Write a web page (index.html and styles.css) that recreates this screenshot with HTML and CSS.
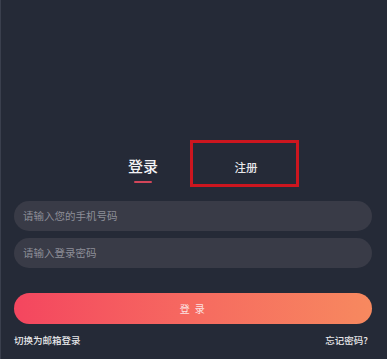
FILE: index.html
```html
<!DOCTYPE html>
<html lang="zh">
<head>
<meta charset="utf-8">
<link rel="stylesheet" href="styles.css">
</head>
<body>
<div class="page">
  <div class="tabs">
    <div class="tab tab-active">
      <span class="tab-label">登录</span>
      <span class="tab-line"></span>
    </div>
    <div class="tab tab-marked">
      <span class="tab-label-small">注册</span>
    </div>
  </div>
  <div class="form">
    <div class="field">请输入您的手机号码</div>
    <div class="field">请输入登录密码</div>
    <div class="btn">登 录</div>
    <div class="links">
      <span>切换为邮箱登录</span>
      <span>忘记密码?</span>
    </div>
  </div>
</div>
</body>
</html>
```

FILE: styles.css
```css
* { box-sizing: border-box; }
html, body {
  margin: 0;
  padding: 0;
  background: #252a37;
  font-family: "Noto Sans CJK SC", "Noto Sans", sans-serif;
}
body { width: 387px; height: 359px; overflow: hidden; }
.page {
  height: 359px;
  padding: 140px 15px 0 13px;
  border-left: 1px solid #3a3f4d;
}
.tabs {
  display: flex;
  align-items: flex-start;
  padding-left: 114px;
}
.tab-active {
  display: flex;
  flex-direction: column;
  align-items: center;
  margin-top: 17px;
  width: 30px;
}
.tab-label {
  color: #f2f2f4;
  font-size: 15px;
  font-weight: 500;
  line-height: 17px;
}
.tab-line {
  margin-top: 7px;
  width: 18px;
  height: 2px;
  background: #d2465a;
  border-radius: 1px;
}
.tab-marked {
  margin-left: 32px;
  width: 109px;
  height: 47px;
  border: 3px solid #cc161f;
  display: flex;
  align-items: center;
  justify-content: center;
  padding-top: 6px;
  padding-left: 3px;
}
.tab-label-small {
  color: #e8e8ec;
  font-size: 11.5px;
  font-weight: 500;
  line-height: 14px;
}
.form {
  margin-top: 14px;
  display: flex;
  flex-direction: column;
}
.field {
  height: 30px;
  border-radius: 15px;
  background: #393b47;
  color: #8d8e98;
  font-size: 10.5px;
  line-height: 30px;
  padding-left: 9px;
}
.field + .field { margin-top: 7px; }
.btn {
  margin-top: 25px;
  height: 31px;
  border-radius: 15.5px;
  background: linear-gradient(90deg, #f4465f 0%, #f66a60 50%, #f7895f 100%);
  color: #fbe3e3;
  font-size: 10px;
  line-height: 31px;
  text-align: center;
  letter-spacing: 1.5px;
}
.links {
  margin-top: 10px;
  display: flex;
  justify-content: space-between;
  color: #e8e8ea;
  font-size: 9.5px;
  font-weight: 500;
  line-height: 12px;
  padding-right: 4px;
}
```
